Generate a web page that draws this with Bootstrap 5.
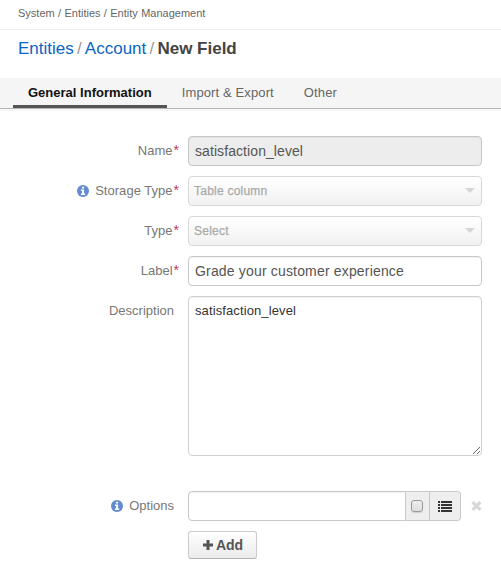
<!DOCTYPE html>
<html lang="en">
<head>
<meta charset="utf-8">
<meta name="viewport" content="width=device-width, initial-scale=1">
<title>New Field</title>
<link href="https://cdn.jsdelivr.net/npm/bootstrap@5.3.0/dist/css/bootstrap.min.css" rel="stylesheet">
<style>
body{font-family:"Liberation Sans",Arial,sans-serif;font-size:13px;line-height:20px;color:#777;background:#fff;overflow:hidden}
.trail{height:30px;border-bottom:1px solid #eee;padding:3px 18px 0;font-size:11px;color:#666;word-spacing:.3px}
.page-title{height:48px;padding:9px 18px 0;font-size:17px;line-height:20px;color:#999;font-weight:400}
.page-title a{color:#0a64c8}
.page-title strong{color:#444}
.slash{margin:0 3.2px}
.tabs{height:31px;background:#f5f5f5;border-bottom:1px solid #b6b6b6;padding-left:13px}
.tabs .nav-link{height:30px;padding:5px 15px 0;color:#666;font-size:13px;line-height:20px;border-radius:0;letter-spacing:.12px}
.tabs .nav-link.active{color:#111;font-weight:700;border-bottom:3px solid #555;letter-spacing:.01px}
.under-tabs{height:2px;background:#f7f7f7}
.settings{padding:25px 19px 0 0}
.field{display:grid;grid-template-columns:174px 294px;column-gap:14px;margin-bottom:10px}
.caption{display:flex;justify-content:flex-end;align-items:center;height:30px;position:relative;white-space:nowrap}
.caption.must{padding-right:1.4px;letter-spacing:.03px}
.caption .req{position:absolute;left:173.5px;top:4px;color:#c3325f;font-size:14px;line-height:20px}
.caption svg{margin-right:6px}
.settings .form-control{height:30px;min-height:0;padding:4px 6px;font-size:14px;line-height:20px;letter-spacing:.08px;color:#555;border:1px solid #c8c8c8;border-radius:4px;box-shadow:inset 0 1px 1px rgba(0,0,0,.06)}
.settings .label-input{letter-spacing:.17px}
.settings .form-control[readonly]{background:#ededed}
.settings textarea.form-control{height:160px;padding:4px 6px;font-size:13px;letter-spacing:.11px;color:#333;border-color:#d0d0d0;resize:vertical}
.picker{height:30px;border:1px solid #d8d8d8;border-radius:4px;background:linear-gradient(#fff,#f1f1f1);padding:0 6px 0 5px;color:#aaa;font-size:12px;letter-spacing:.23px;-webkit-text-stroke:.25px #aaa}
.picker svg{margin-top:-1px}
.option-group{width:273px;height:30px}
.addon{background:#eee;border:1px solid #c8c8c8;border-left:0;display:flex;align-items:center;justify-content:center}
.addon-check{width:24px;padding-right:1px}
.addon-list{width:31px;border-radius:0 4px 4px 0}
.tick{width:12px;height:12px;border:1px solid #999;border-radius:3px;background:linear-gradient(#eee,#ddd);box-shadow:0 1px 1px rgba(0,0,0,.12)}
.gap-row{margin-top:35px}
.remove{margin-left:10px}
.add-btn{width:69px;height:28px;padding:0 0 0 1px;border:1px solid #ccc;border-bottom-color:#b3b3b3;border-radius:3px;background:linear-gradient(#fff,#ebebeb);color:#555;font-weight:700;font-size:14px;line-height:26px}
.add-btn svg{margin-right:3px}
</style>
<script src="https://cdn.jsdelivr.net/npm/bootstrap@5.3.0/dist/js/bootstrap.bundle.min.js"></script>
</head>
<body>
<svg width="0" height="0" class="d-none">
  <symbol id="info" viewBox="0 0 11 11"><circle cx="5.5" cy="5.5" r="5.5" fill="#638bd0"/><path d="M4.5 1.6h2v1.6h-2zM3.6 4.2h2.9v3.7h1v1.2H3.6V7.9h1V5.4h-1z" fill="#fff"/></symbol>
</svg>
<div class="trail">System / Entities / Entity Management</div>
<h1 class="page-title mb-0"><a href="#" class="text-decoration-none">Entities</a><span class="slash">/</span><a href="#" class="text-decoration-none">Account</a><span class="slash">/</span><strong>New Field</strong></h1>
<nav class="nav tabs flex-nowrap">
  <a class="nav-link active" href="#">General Information</a>
  <a class="nav-link" href="#">Import &amp; Export</a>
  <a class="nav-link" href="#">Other</a>
</nav>
<div class="under-tabs"></div>
<form class="settings">
  <div class="field">
    <label class="caption must">Name<span class="req">*</span></label>
    <input class="form-control" value="satisfaction_level" readonly>
  </div>
  <div class="field">
    <label class="caption must"><svg width="12" height="12"><use href="#info"/></svg>Storage Type<span class="req">*</span></label>
    <div class="picker d-flex align-items-center justify-content-between">Table column<svg width="10" height="5"><path d="M0 0h10L5 5z" fill="#d5d5d5"/></svg></div>
  </div>
  <div class="field">
    <label class="caption must">Type<span class="req">*</span></label>
    <div class="picker d-flex align-items-center justify-content-between">Select<svg width="10" height="5"><path d="M0 0h10L5 5z" fill="#d5d5d5"/></svg></div>
  </div>
  <div class="field">
    <label class="caption must">Label<span class="req">*</span></label>
    <input class="form-control label-input" value="Grade your customer experience">
  </div>
  <div class="field">
    <label class="caption">Description</label>
    <textarea class="form-control">satisfaction_level</textarea>
  </div>
  <div class="field gap-row">
    <label class="caption"><svg width="12" height="12"><use href="#info"/></svg>Options</label>
    <div class="d-flex align-items-center">
      <div class="option-group d-flex">
        <input class="form-control rounded-end-0">
        <span class="addon addon-check flex-shrink-0"><span class="tick"></span></span>
        <span class="addon addon-list flex-shrink-0"><svg width="14" height="11" fill="#333" shape-rendering="crispEdges"><path d="M0 0h2v2H0zM3 0h11v2H3zM0 3h2v2H0zM3 3h11v2H3zM0 6h2v2H0zM3 6h11v2H3zM0 9h2v2H0zM3 9h11v2H3z"/></svg></span>
      </div>
      <svg class="remove" width="11" height="10"><path d="M1.5 1.1l8 7.8M9.5 1.1l-8 7.8" stroke="#d8d8d8" stroke-width="3.2"/></svg>
    </div>
  </div>
  <div class="field">
    <span></span>
    <button type="button" class="btn add-btn d-flex align-items-center justify-content-center"><svg width="10" height="10"><path d="M3.5 0h3v3.5H10v3H6.5V10h-3V6.5H0v-3h3.5z" fill="#555"/></svg>Add</button>
  </div>
</form>
</body>
</html>
